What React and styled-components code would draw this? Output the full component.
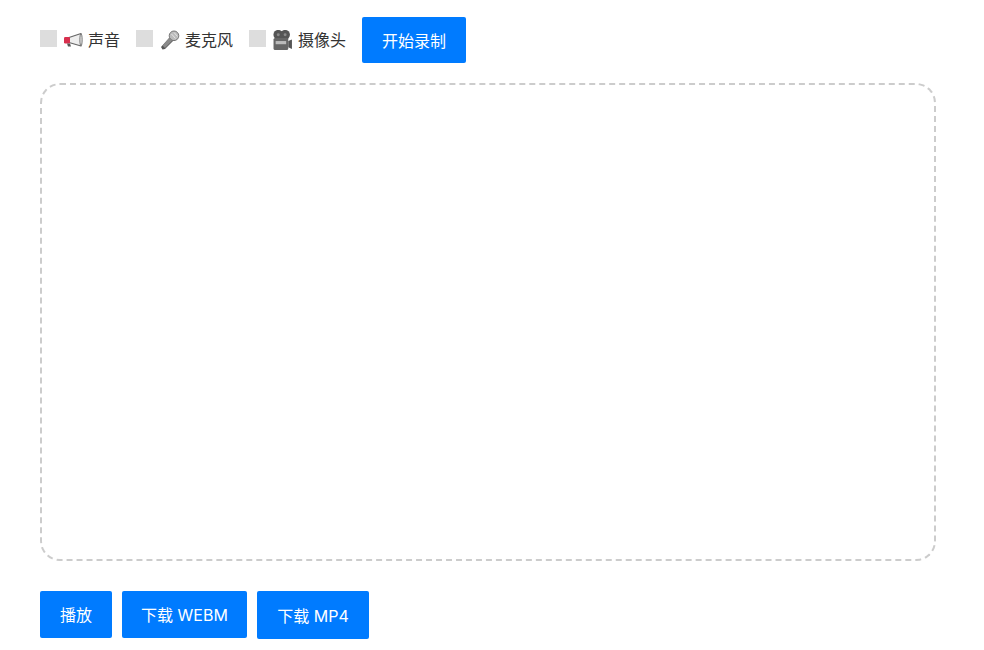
import React from "react";
import styled, { createGlobalStyle } from "styled-components";

const Global = createGlobalStyle`
  html, body { margin: 0; padding: 0; background: #fff; }
  body { font-family: Inter, "Noto Sans CJK SC", sans-serif; font-size: 16px; color: #333; }
`;
const Page = styled.main`
  padding: 17px 0 0 40px;
  width: 896px;
`;
const Toolbar = styled.div`
  display: flex;
  align-items: flex-start;
  height: 46px;
`;
const Option = styled.label`
  display: flex;
  align-items: center;
  height: 46px;
  margin-right: 16px;
`;
const Check = styled.span`
  width: 17px;
  height: 17px;
  background: #ddd;
  margin: -3px 7px 0 0;
  flex: none;
`;
const Glyph = styled.svg`
  width: 20px;
  height: 20px;
  margin-right: ${(p) => p.$after}px;
  flex: none;
`;
const Caption = styled.span`
  line-height: 22px;
  white-space: nowrap;
`;
const Button = styled.button`
  display: inline-flex;
  align-items: center;
  justify-content: center;
  box-sizing: border-box;
  width: ${(p) => p.$w}px;
  height: ${(p) => p.$h}px;
  padding: 0 0 ${(p) => p.$lift || 0}px;
  border: 0;
  border-radius: 2px;
  background: #007bff;
  color: #fff;
  font: inherit;
  white-space: nowrap;
`;
const Stage = styled.div`
  box-sizing: border-box;
  height: 478px;
  margin-top: 20px;
  border: 2px dashed #ccc;
  border-radius: 20px;
`;
const Actions = styled.div`
  display: flex;
  align-items: flex-start;
  gap: 10px;
  margin-top: 30px;
`;

const Speaker = () => (
  <Glyph $after={4} viewBox="1 0 20 20">
    <path d="M6 7.5 18 3.5V16L6 12.5Z" fill="#eee" stroke="#666" strokeWidth="1.2" strokeLinejoin="round" />
    <rect x="1" y="7" width="6" height="6.5" rx="1.2" fill="#d8304e" />
    <path d="M4 13.5 5 16.5H8L7 13.5Z" fill="#555" />
    <ellipse cx="18" cy="9.8" rx="1.2" ry="6" fill="#ddd" stroke="#666" strokeWidth=".8" />
  </Glyph>
);
const Mic = () => (
  <Glyph $after={5} viewBox="0 0 20 20">
    <path d="M11 6 14.5 9.5 5 19 2.5 19.5 1 17Z" fill="#555" />
    <path d="M9.5 7.5 12.5 10.5 5 18 2.5 15.5Z" fill="#8a8a8a" />
    <circle cx="14" cy="5.8" r="4.8" fill="#bbb" stroke="#777" strokeWidth="1" />
    <path d="M11.5 4 15.5 8.5M14 2.5 17.5 6.5" stroke="#eee" strokeWidth=".8" />
  </Glyph>
);
const Camera = () => (
  <Glyph $after={5} viewBox="1.5 0.5 19 19">
    <circle cx="6.5" cy="5" r="4.6" fill="#555" />
    <circle cx="13" cy="5" r="4.6" fill="#555" />
    <rect x="2" y="8" width="14" height="11.5" rx="1.5" fill="#666" />
    <rect x="4" y="11" width="10" height="3" fill="#bbb" />
    <path d="M16 11 19.5 9.5V18.5L16 17Z" fill="#555" />
    <circle cx="6.5" cy="5" r="1.4" fill="#8a8a8a" />
    <circle cx="13" cy="5" r="1.4" fill="#8a8a8a" />
  </Glyph>
);

export default function App() {
  return (
    <Page>
      <Global />
      <Toolbar>
        <Option>
          <Check />
          <Speaker />
          <Caption>声音</Caption>
        </Option>
        <Option>
          <Check />
          <Mic />
          <Caption>麦克风</Caption>
        </Option>
        <Option>
          <Check />
          <Camera />
          <Caption>摄像头</Caption>
        </Option>
        <Button $w={104} $h={46} $lift={1}>开始录制</Button>
      </Toolbar>
      <Stage />
      <Actions>
        <Button $w={72} $h={47} $lift={2}>播放</Button>
        <Button $w={125} $h={47} $lift={2}>下载 WEBM</Button>
        <Button $w={112} $h={48}>下载 MP4</Button>
      </Actions>
    </Page>
  );
}
